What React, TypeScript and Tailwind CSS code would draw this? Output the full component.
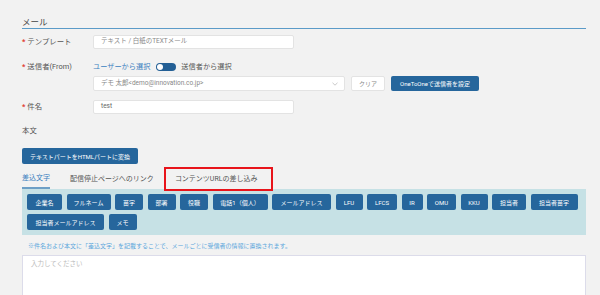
import React from 'react'

// widths taken from the reference so the row wraps where it does there
const tags = [
  { label: '企業名', w: 'w-[35px]' },
  { label: 'フルネーム', w: 'w-[44px]' },
  { label: '苗字', w: 'w-[28px]' },
  { label: '部署', w: 'w-[28px]' },
  { label: '役職', w: 'w-[28px]' },
  { label: '電話1（個人）', w: 'w-[55px]' },
  { label: 'メールアドレス', w: 'w-[59px]' },
  { label: 'LFU', w: 'w-[27px]' },
  { label: 'LFCS', w: 'w-[30px]' },
  { label: 'IR', w: 'w-[21px]' },
  { label: 'OMU', w: 'w-[29px]' },
  { label: 'KKU', w: 'w-[27px]' },
  { label: '担当者', w: 'w-[34px]' },
  { label: '担当者苗字', w: 'w-[47px]' },
  { label: '担当者メールアドレス', w: 'w-[77px]' },
  { label: 'メモ', w: 'w-[28px]' },
]

const Star = () => <span className="mr-[2px] font-bold text-[#e0392f]">*</span>

const App: React.FC = () => {
  return (
    <div className="h-[295px] overflow-hidden bg-[#f2f2f2] pl-[22px] pr-[14px] pt-[16px] font-['Roboto','Noto_Sans_CJK_JP',sans-serif] text-[#555]">
      <div className="border-b border-[#5b9bc8] text-[8.5px] leading-[12px] text-[#444]">メール</div>

      <div className="mt-[6px] flex h-[14px] items-center">
        <div className="w-[71px] text-[7.4px]">
          <Star />
          テンプレート
        </div>
        <div className="flex h-[14px] w-[201px] items-center rounded-[2px] border border-[#e3e3e3] bg-white pl-[7px] text-[6.5px] text-[#888]">
          テキスト / 白紙のTEXTメール
        </div>
      </div>

      <div className="mt-[13px] flex">
        <div className="w-[71px] text-[7.4px] leading-[10px]">
          <Star />
          送信者(From)
        </div>
        <div>
          <div className="flex h-[10px] items-center text-[7.2px]">
            <span className="text-[#3a7fc0]">ユーザーから選択</span>
            <span className="ml-[6px] mr-[5px] flex h-[8px] w-[20px] items-center rounded-full bg-[#235f95] px-[1px]">
              <span className="h-[6px] w-[6px] rounded-full bg-white" />
            </span>
            <span>送信者から選択</span>
          </div>
          <div className="mt-[4px] flex items-center gap-[6px]">
            <div className="flex h-[15px] w-[252px] items-center justify-between rounded-[2px] border border-[#e3e3e3] bg-white pl-[7px] pr-[6px] text-[6.5px] text-[#888]">
              <span>デモ 太郎&lt;demo@innovation.co.jp&gt;</span>
              <svg width="6" height="4" viewBox="0 0 6 4" fill="none">
                <path d="M0.5 0.8 L3 3.2 L5.5 0.8" stroke="#bbb" strokeWidth="0.8" />
              </svg>
            </div>
            <div className="flex h-[15px] items-center rounded-[2px] border border-[#e3e3e3] bg-white px-[7px] text-[6px] text-[#888]">
              クリア
            </div>
            <div className="flex h-[15px] items-center rounded-[2px] bg-[#26669c] px-[9px] text-[6px] text-white">
              OneToOneで送信者を設定
            </div>
          </div>
        </div>
      </div>

      <div className="mt-[9px] flex h-[14px] items-center">
        <div className="w-[71px] text-[7.4px]">
          <Star />
          件名
        </div>
        <div className="flex h-[14px] w-[201px] items-center rounded-[2px] border border-[#e3e3e3] bg-white pl-[7px] text-[6.5px] text-[#666]">
          test
        </div>
      </div>

      <div className="mt-[11px] text-[7.4px] leading-[12px]">本文</div>

      <div className="mt-[11px] flex">
        <div className="flex h-[16px] items-center rounded-[2px] bg-[#26669c] px-[8px] text-[6px] text-white">
          テキストパートをHTMLパートに変換
        </div>
      </div>

      <div className="mt-[3px] flex h-[22px] items-stretch text-[7px]">
        <div className="flex items-center border-b-2 border-[#6d9fc6] pt-[2px] text-[#3a7fc0]">差込文字</div>
        <div className="ml-[20px] flex items-center pt-[2px]">配信停止ページへのリンク</div>
        <div className="ml-[10px] flex h-[24px] items-center border-2 border-[#e8141b] pl-[9px] pr-[13px]">
          コンテンツURLの差し込み
        </div>
      </div>

      <div className="flex flex-wrap gap-x-[4.5px] gap-y-[4px] bg-[#c6e1e5] p-[5px]">
        {tags.map((t) => (
          <div
            key={t.label}
            className={`flex h-[16px] items-center justify-center rounded-[2px] bg-[#26669c] text-[6px] text-white ${t.w}`}
          >
            {t.label}
          </div>
        ))}
      </div>

      <div className="mt-[7px] pl-[6px] text-[6px] leading-[8px] text-[#5aa6dc]">
        ※件名および本文に「差込文字」を記載することで、メールごとに受信者の情報に置換されます。
      </div>

      <div className="mt-[5px] h-[60px] border border-[#dcdcea] bg-white pl-[8px] pt-[4px] text-[6.5px] text-[#bbb]">
        入力してください
      </div>
    </div>
  )
}

export default App
